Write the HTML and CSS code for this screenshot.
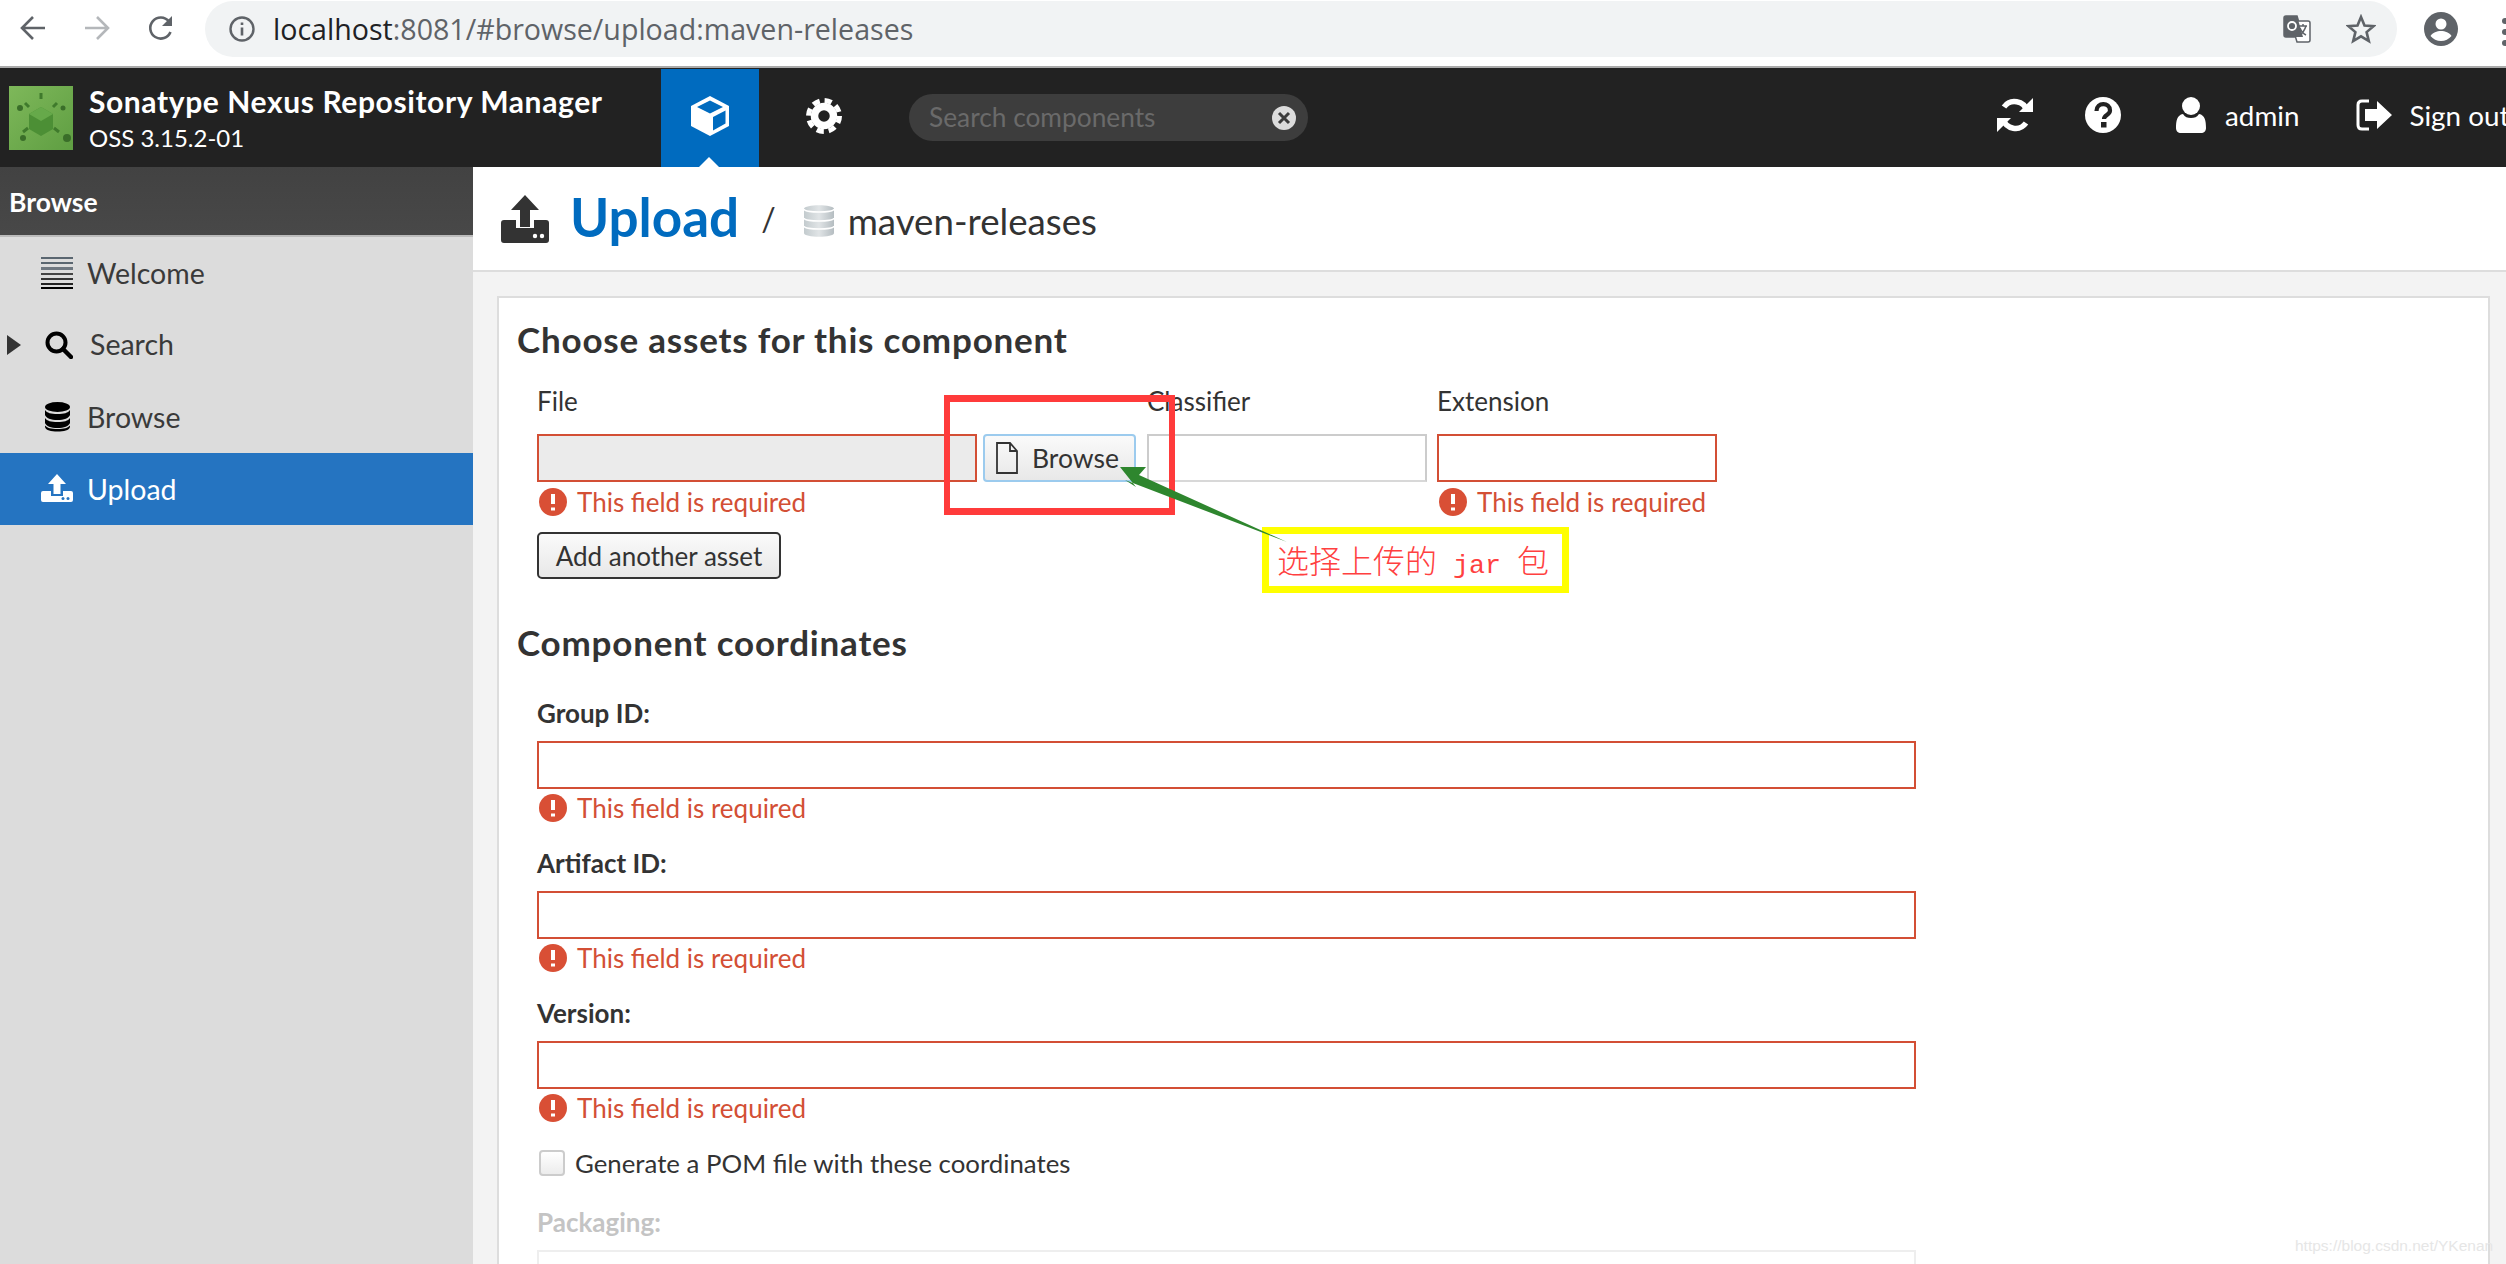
FILE: index.html
```html
<!DOCTYPE html>
<html lang="en">
<head>
    <meta charset="UTF-8">
    <title>Nexus Repository Manager</title>
    <link rel="stylesheet" href="styles.css">
</head>
<body>
    <!-- browser toolbar -->
    <div class="browser-bar">
        <svg class="nav-icon" viewBox="0 0 26 26"><path d="M25 13H3M13 2 2 13l11 11" fill="none" stroke="#5f6368" stroke-width="2.6"/></svg>
        <svg class="nav-icon" viewBox="0 0 26 26"><path d="M1 13h22M13 2l11 11-11 11" fill="none" stroke="#b4b7ba" stroke-width="2.6"/></svg>
        <svg class="nav-icon" viewBox="0 0 26 26"><path d="M22.5 17a10.5 10.5 0 1 1-1.6-10.6" fill="none" stroke="#5f6368" stroke-width="2.6"/><path d="M24 1v10H14z" fill="#5f6368"/></svg>
        <div class="url-pill">
            <svg class="info-icon" viewBox="0 0 26 26"><circle cx="13" cy="13" r="11.5" fill="none" stroke="#5f6368" stroke-width="2.4"/><path d="M13 11.5V19.5M13 6.5V9" stroke="#5f6368" stroke-width="2.6"/></svg>
            <span class="url-text"><span class="url-host">localhost</span>:8081/#browse/upload:maven-releases</span>
            <svg class="translate-icon" viewBox="0 0 28 28"><path d="M1 3q0-2 2-2h11l1.500 5H25q2 0 2 2v17q0 2-2 2H14l-1.500-5H3q-2 0-2-2z" fill="#fff" stroke="#5f6368" stroke-width="1.500"/><path d="M3 1h11l6 21H3q-2 0-2-2V3q0-2 2-2z" fill="#5f6368"/><circle cx="9" cy="11" r="4" fill="none" stroke="#fff" stroke-width="1.800"/><path d="M16 11h8M20 9v2M23 11q-2 6-6 9M17 13q2 5 6 7" fill="none" stroke="#5f6368" stroke-width="1.500"/></svg>
            <svg class="star-icon" viewBox="0 0 30 30"><path d="m15 3 3.500 8.500 9 .7-6.900 5.900 2.200 9L15 22.300 7.200 27.100l2.200-9-6.900-5.900 9-.7z" fill="none" stroke="#5f6368" stroke-width="2.600"/></svg>
        </div>
        <svg class="account-icon" viewBox="0 0 34 34"><circle cx="17" cy="17" r="17" fill="#5f6368"/><circle cx="17" cy="12" r="5.500" fill="#fff"/><path d="M6.500 24c2-3.500 6.500-5 10.500-5s8.500 1.500 10.500 5c-2.500 3-6.500 5-10.500 5s-8-2-10.500-5z" fill="#fff"/></svg>
        <div class="menu-dots"><i></i><i></i><i></i></div>
    </div>

    <!-- nexus header -->
    <header class="app-header">
        <svg class="logo" viewBox="0 0 64 64">
            <defs><linearGradient id="logoBg" x1="0" y1="0" x2="1" y2="1"><stop offset="0" stop-color="#7eb85a"/><stop offset="1" stop-color="#5f9e42"/></linearGradient></defs>
            <rect width="64" height="64" fill="url(#logoBg)"/>
            <path d="M32 21 44 28v15L32 50 20 43V28z" fill="#4c8f35"/>
            <path d="M32 21 44 28 32 35 20 28z" fill="#66a94a"/>
            <path d="M32 7v6M16 17l4 4M48 17l-4 4M14 46l5-4M50 46l-5-4" stroke="#3f7a2c" stroke-width="3"/>
            <circle cx="11" cy="22" r="3" fill="#3a6e29"/><circle cx="54" cy="22" r="2.500" fill="#3a6e29"/><circle cx="14" cy="52" r="3" fill="#3a6e29"/><circle cx="58" cy="52" r="4" fill="#3a6e29"/>
        </svg>
        <div class="brand">
            <div class="brand-title">Sonatype Nexus Repository Manager</div>
            <div class="brand-version">OSS 3.15.2-01</div>
        </div>
        <div class="mode-tab mode-tab-active">
            <svg class="cube-icon" viewBox="0 0 38 40"><path d="M19 0 38 10v20L19 40 0 30V10z" fill="#fff"/><path d="M19 4.500 32 11 19 17.500 6 11z" fill="#006bbf"/><path d="M22 21 34.500 14.500V27.500L22 34.500z" fill="#006bbf"/></svg>
            <span class="tab-notch"></span>
        </div>
        <div class="mode-tab">
            <svg class="gear-icon" viewBox="0 0 36 36"><circle cx="18" cy="18" r="15.500" fill="none" stroke="#fff" stroke-width="5" stroke-dasharray="7.200 5"/><circle cx="18" cy="18" r="9.500" fill="none" stroke="#fff" stroke-width="7.500"/></svg>
        </div>
        <div class="search-pill">
            <span class="search-hint">Search components</span>
            <svg class="clear-icon" viewBox="0 0 24 24"><circle cx="12" cy="12" r="12" fill="#dcdcdc"/><path d="m7 7 10 10M17 7 7 17" stroke="#3b3b3b" stroke-width="3"/></svg>
        </div>
        <div class="header-right">
            <svg class="head-icon" viewBox="0 0 36 36"><path d="M30 14A13 13 0 0 0 7 10" fill="none" stroke="#fff" stroke-width="5.500"/><path d="M36 1v14H22z" fill="#fff"/><path d="M6 22a13 13 0 0 0 23 4" fill="none" stroke="#fff" stroke-width="5.500"/><path d="M0 35V21h14z" fill="#fff"/></svg>
            <svg class="head-icon help-icon" viewBox="0 0 36 36"><circle cx="18" cy="18" r="18" fill="#fff"/><path d="M11.500 14c0-9 13.500-9 13.500-.5 0 4.500-6 4.500-6 8.500" fill="none" stroke="#222" stroke-width="4.200"/><rect x="16" y="25" width="5.500" height="5.500" fill="#222"/></svg>
            <svg class="user-icon" viewBox="0 0 30 36"><circle cx="15" cy="9" r="9" fill="#fff"/><path d="M0 31c0-7 1-13 7-14 2 3 4.500 4 8 4s6-1 8-4c6 1 7 7 7 14 0 3-2 5-5 5H5c-3 0-5-2-5-5z" fill="#fff"/></svg>
            <span class="head-text admin-text">admin</span>
            <svg class="head-icon signout-icon" viewBox="0 0 36 36"><path d="M13 4H6Q2 4 2 8v20q0 4 4 4h7" fill="none" stroke="#fff" stroke-width="3"/><path d="M9 12h12V4l15 14-15 14v-8H9z" fill="#fff"/></svg>
            <span class="head-text">Sign out</span>
        </div>
    </header>

    <div class="main">
        <nav class="sidebar">
            <div class="side-title">Browse</div>
            <a class="side-item">
                <svg class="side-icon" viewBox="0 0 32 32"><rect width="32" height="2" fill="#5a6670"/><rect y="5" width="32" height="2" fill="#5a6670"/><rect y="10" width="32" height="3" fill="#6e7780"/><rect y="16" width="32" height="2" fill="#444"/><rect y="21" width="32" height="2" fill="#333"/><rect y="26" width="32" height="2" fill="#222"/><rect y="30" width="32" height="2" fill="#000"/></svg>
                <span>Welcome</span>
            </a>
            <a class="side-item side-item-search">
                <span class="side-arrow"></span>
                <svg class="side-icon search-icon" viewBox="0 0 28 28"><circle cx="11.500" cy="11.500" r="9" fill="none" stroke="#000" stroke-width="4"/><path d="m18 18 8 8" stroke="#000" stroke-width="4.500" stroke-linecap="round"/></svg>
                <span>Search</span>
            </a>
            <a class="side-item">
                <svg class="side-icon" viewBox="0 0 32 32"><g transform="translate(4 1)"><ellipse cx="12.500" cy="5" rx="12.500" ry="5"/><path d="M0 8c2 3 6 4 12.500 4S23 11 25 8v5c-1 3-6 5-12.500 5S1 16 0 13zM0 16c2 3 6 4 12.500 4S23 19 25 16v5c-1 3-6 5-12.500 5S1 24 0 21z"/><path d="M0 23.500c2 2.500 6 3.500 12.500 3.500S23 26 25 23.500V25c-1 3.500-6 4.500-12.500 4.500S1 28.500 0 25z"/></g></svg>
                <span>Browse</span>
            </a>
            <a class="side-item side-item-active">
                <svg class="side-icon" viewBox="0 0 32 32"><path d="M16 1 25 11H19.500V21H12.500V11H7z" fill="#fff"/><path d="M2 18H10V23H22V18H30q2 0 2 2v7q0 2-2 2H2q-2 0-2-2v-7q0-2 2-2z" fill="#fff"/><circle cx="22" cy="25.500" r="1.500" fill="#2574c1"/><circle cx="27" cy="25.500" r="1.500" fill="#2574c1"/></svg>
                <span>Upload</span>
            </a>
        </nav>

        <section class="content">
            <div class="crumbs">
                <svg class="crumb-upload" viewBox="0 0 48 48"><path d="M24 0 38 15H29V32H19V15H10z" fill="#333"/><path d="M3 25H15V33H33V25H45q3 0 3 3v17q0 3-3 3H3q-3 0-3-3V28q0-3 3-3z" fill="#333"/><circle cx="34" cy="41" r="2.200" fill="#fff"/><circle cx="41" cy="41" r="2.200" fill="#fff"/></svg>
                <span class="crumb-root">Upload</span>
                <span class="crumb-sep">/</span>
                <svg class="crumb-db" viewBox="0 0 30 32"><defs><linearGradient id="dbFill" x1="0" y1="0" x2="1" y2="0"><stop offset="0" stop-color="#c3cbce"/><stop offset=".5" stop-color="#e0e4e6"/><stop offset="1" stop-color="#b5bdc1"/></linearGradient></defs><path d="M0 4c0-5 30-5 30 0v24c0 5-30 5-30 0z" fill="url(#dbFill)"/><path d="M0 4c0 4 30 4 30 0M0 13c0 4 30 4 30 0M0 21c0 4 30 4 30 0" fill="none" stroke="#fff" stroke-width="1.500"/></svg>
                <span class="crumb-leaf">maven-releases</span>
            </div>

            <div class="panel">
                <h2 class="section-title">Choose assets for this component</h2>
                <div class="asset-row">
                    <div class="asset-col col-file">
                        <div class="asset-label">File</div>
                        <div class="input input-bad input-readonly"></div>
                        <div class="field-error"><svg class="error-icon" viewBox="0 0 28 28"><circle cx="14" cy="14" r="14" fill="#d94f35"/><path d="M14 6v10M14 19.500v3" stroke="#fff" stroke-width="4"/></svg>This field is required</div>
                        <button class="btn-add">Add another asset</button>
                    </div>
                    <div class="asset-col col-browse">
                        <div class="asset-label"></div>
                        <button class="btn-browse">
                            <svg class="file-icon" viewBox="0 0 22 32"><path d="M1 1h13l7 8v22H1zM14 1v8h7" fill="none" stroke="#333" stroke-width="1.800"/></svg>
                            Browse
                        </button>
                    </div>
                    <div class="asset-col col-classifier">
                        <div class="asset-label">Classifier</div>
                        <div class="input"></div>
                    </div>
                    <div class="asset-col col-extension">
                        <div class="asset-label">Extension</div>
                        <div class="input input-bad"></div>
                        <div class="field-error"><svg class="error-icon" viewBox="0 0 28 28"><circle cx="14" cy="14" r="14" fill="#d94f35"/><path d="M14 6v10M14 19.500v3" stroke="#fff" stroke-width="4"/></svg>This field is required</div>
                    </div>
                </div>

                <h2 class="section-title section-title-second">Component coordinates</h2>
                <div class="fields">
                    <div class="field">
                        <label class="field-label">Group ID:</label>
                        <div class="input input-bad"></div>
                        <div class="field-error"><svg class="error-icon" viewBox="0 0 28 28"><circle cx="14" cy="14" r="14" fill="#d94f35"/><path d="M14 6v10M14 19.500v3" stroke="#fff" stroke-width="4"/></svg>This field is required</div>
                    </div>
                    <div class="field">
                        <label class="field-label">Artifact ID:</label>
                        <div class="input input-bad"></div>
                        <div class="field-error"><svg class="error-icon" viewBox="0 0 28 28"><circle cx="14" cy="14" r="14" fill="#d94f35"/><path d="M14 6v10M14 19.500v3" stroke="#fff" stroke-width="4"/></svg>This field is required</div>
                    </div>
                    <div class="field">
                        <label class="field-label">Version:</label>
                        <div class="input input-bad"></div>
                        <div class="field-error"><svg class="error-icon" viewBox="0 0 28 28"><circle cx="14" cy="14" r="14" fill="#d94f35"/><path d="M14 6v10M14 19.500v3" stroke="#fff" stroke-width="4"/></svg>This field is required</div>
                    </div>
                    <div class="check-row"><span class="checkbox"></span>Generate a POM file with these coordinates</div>
                    <label class="field-label field-label-disabled">Packaging:</label>
                    <div class="input input-disabled"></div>
                </div>
            </div>
        </section>
    </div>

    <!-- annotations drawn over the screenshot -->
    <div class="mark-box"></div>
    <div class="note-box">选择上传的<span class="note-latin"> jar </span>包</div>
    <svg class="mark-arrow" viewBox="0 0 180 90"><path d="M0 0H26L19 8 167 75 5 13 16 20z" fill="#2e862e"/></svg>
    <div class="watermark">https://blog.csdn.net/YKenan</div>
</body>
</html>
```

FILE: styles.css
```css
html, body {
    margin: 0;
    height: 1264px;
    overflow: hidden;
}
body {
    position: relative;
    font-family: Lato, "Open Sans", sans-serif;
    color: #333;
    background: #fff;
}

/* browser toolbar */
.browser-bar {
    display: flex;
    align-items: flex-start;
    height: 66px;
    box-sizing: border-box;
    padding-top: 1px;
    background: #fff;
}
.browser-bar > * {
    flex: none;
}
.nav-icon {
    width: 26px;
    height: 26px;
    margin: 14px 38px 0 0;
}
.nav-icon:first-child {
    margin-left: 20px;
}
.nav-icon:nth-child(3) {
    margin-right: 31px;
}
.url-pill {
    display: flex;
    align-items: center;
    width: 2192px;
    height: 56px;
    border-radius: 28px;
    background: #f1f3f4;
}
.info-icon {
    width: 26px;
    height: 26px;
    margin-left: 24px;
}
.url-text {
    flex: 1;
    margin: -2px 0 0 18px;
    font-family: "Open Sans", sans-serif;
    font-size: 28.6px;
    color: #5f6368;
    white-space: nowrap;
}
.url-host {
    color: #202124;
}
.translate-icon {
    width: 28px;
    height: 28px;
}
.star-icon {
    width: 30px;
    height: 30px;
    margin: 0 21px 0 35px;
}
.account-icon {
    width: 34px;
    height: 34px;
    margin: 11px 0 0 27px;
}
.menu-dots {
    display: flex;
    flex-direction: column;
    gap: 5px;
    margin: 17px 0 0 44px;
}
.menu-dots i {
    display: block;
    width: 6px;
    height: 6px;
    border-radius: 50%;
    background: #5f6368;
}

/* nexus header */
.app-header {
    display: flex;
    align-items: center;
    height: 101px;
    box-sizing: border-box;
    border-top: 2px solid #aaa;
    background: #222;
    color: #fff;
}
.app-header > * {
    flex: none;
}
.logo {
    width: 64px;
    height: 64px;
    margin-left: 9px;
}
.brand {
    width: 572px;
    margin-left: 16px;
}
.brand-title {
    font-size: 30px;
    font-weight: 700;
    letter-spacing: .6px;
    line-height: 36px;
    white-space: nowrap;
}
.brand-version {
    margin-top: 5px;
    font-size: 24px;
    line-height: 28px;
}
.mode-tab {
    position: relative;
    display: flex;
    align-items: center;
    justify-content: center;
    width: 98px;
    height: 98px;
    align-self: flex-end;
}
.mode-tab-active {
    background: #006bbf;
}
.cube-icon {
    width: 38px;
    height: 40px;
    margin-bottom: 4px;
}
.gear-icon {
    width: 36px;
    height: 36px;
    margin: 0 0 4px 32px;
}
.tab-notch {
    position: absolute;
    left: 38px;
    bottom: 0;
    border-left: 10px solid transparent;
    border-right: 10px solid transparent;
    border-bottom: 10px solid #fff;
}
.search-pill {
    display: flex;
    align-items: center;
    justify-content: space-between;
    width: 399px;
    height: 47px;
    box-sizing: border-box;
    margin: 0 0 0 52px;
    padding: 0 12px 0 20px;
    border-radius: 24px;
    background: #3d3d3d;
}
.search-hint {
    margin-top: -2px;
    font-size: 26.3px;
    color: #6a6a6a;
}
.clear-icon {
    width: 24px;
    height: 24px;
}
.header-right {
    display: flex;
    align-items: center;
    margin-left: 689px;
    padding-bottom: 5px;
    white-space: nowrap;
}
.head-icon {
    flex: none;
    width: 36px;
    height: 36px;
}
.help-icon {
    margin-left: 52px;
}
.user-icon {
    flex: none;
    width: 30px;
    height: 36px;
    margin-left: 55px;
}
.head-text {
    margin-left: 17px;
    font-size: 27.8px;
}
.admin-text {
    margin-left: 19px;
}
.signout-icon {
    margin-left: 57px;
}

/* left nav */
.main {
    display: flex;
    height: 1097px;
}
.sidebar {
    flex: none;
    width: 473px;
    background: #dcdcdc;
}
.side-title {
    height: 70px;
    box-sizing: border-box;
    padding: 19px 0 0 9px;
    border-bottom: 2px solid #bbb;
    background: linear-gradient(#424242, #484848);
    color: #fff;
    font-size: 26.500px;
    font-weight: 700;
}
.side-item {
    position: relative;
    display: flex;
    align-items: center;
    height: 72px;
    padding-left: 41px;
    font-size: 28.5px;
    color: #3a3a3a;
}
.side-item span:last-child {
    margin-left: 14px;
}
.side-item-search span:last-child {
    margin-left: 17px;
    margin-top: -2px;
}
.side-item-active {
    background: #2574c1;
    color: #fff;
}
.side-icon {
    width: 32px;
    height: 32px;
}
.search-icon {
    width: 28px;
    height: 28px;
    margin-left: 4px;
}
.side-arrow {
    position: absolute;
    left: 7px;
    top: 26px;
    border-top: 10px solid transparent;
    border-bottom: 10px solid transparent;
    border-left: 14px solid #333;
}

/* breadcrumb */
.content {
    flex: 1;
    min-width: 0;
    background: #f3f3f3;
}
.crumbs {
    display: flex;
    align-items: center;
    height: 105px;
    box-sizing: border-box;
    padding-left: 28px;
    border-bottom: 2px solid #ddd;
    background: #fff;
}
.crumb-upload {
    width: 48px;
    height: 48px;
}
.crumb-root {
    margin: -4px 0 0 21px;
    font-size: 53px;
    font-weight: 700;
    color: #006bbf;
}
.crumb-sep {
    margin-left: 22px;
    font-size: 32px;
    color: #333;
}
.crumb-db {
    width: 30px;
    height: 32px;
    margin: 4px 0 0 28px;
}
.crumb-leaf {
    margin: 4px 0 0 14px;
    font-size: 36.7px;
    color: #333;
}

/* form */
.panel {
    width: 1993px;
    box-sizing: border-box;
    margin: 24px 0 0 24px;
    padding: 18px 0 0 18px;
    border: 2px solid #ddd;
    background: #fff;
}
.section-title {
    height: 48px;
    margin: 0;
    font-size: 35px;
    font-weight: 700;
    letter-spacing: .8px;
    line-height: 47px;
    white-space: nowrap;
}
.section-title-second {
    margin-top: 40px;
}
.asset-row {
    display: flex;
    margin: 20px 0 0 20px;
}
.asset-col {
    box-sizing: border-box;
}
.col-file {
    width: 446px;
    padding-right: 6px;
}
.col-browse {
    width: 164px;
    padding-right: 11px;
}
.col-classifier {
    width: 290px;
    padding-right: 10px;
}
.col-extension {
    width: 280px;
}
.asset-label {
    height: 32px;
    margin-bottom: 18px;
    font-size: 26px;
    line-height: 34px;
}
.input {
    height: 48px;
    box-sizing: border-box;
    border: 2px solid #ccc;
    border-bottom-color: #d8d8d8;
    background: #fff;
}
.input-bad {
    border-color: #d34f35;
}
.input-readonly {
    background: #ebebeb;
}
.input-disabled {
    border-color: #eee;
}
.field-error {
    display: flex;
    align-items: center;
    height: 28px;
    margin-top: 6px;
    padding-left: 2px;
    font-size: 26px;
    color: #d34f35;
    white-space: nowrap;
}
.error-icon {
    flex: none;
    width: 28px;
    height: 28px;
    margin-right: 10px;
}
.btn-add {
    display: block;
    width: 244px;
    height: 47px;
    margin-top: 16px;
    padding: 0;
    border: 2px solid #333;
    border-radius: 5px;
    background: linear-gradient(#fafafa, #e8e8e8);
    color: #333;
    font-family: inherit;
    font-size: 26px;
}
.btn-browse {
    display: flex;
    align-items: center;
    width: 153px;
    height: 48px;
    box-sizing: border-box;
    padding: 0 0 0 11px;
    border: 2px solid #9ccbee;
    border-radius: 4px;
    background: linear-gradient(#fafafa, #e8e8e8);
    color: #333;
    font-family: inherit;
    font-size: 26.5px;
}
.file-icon {
    width: 22px;
    height: 32px;
    margin-right: 14px;
}
.fields {
    margin: 29px 0 0 20px;
    width: 1379px;
}
.field {
    margin-bottom: 24px;
}
.field-label {
    display: block;
    height: 32px;
    margin-bottom: 13px;
    font-size: 26px;
    font-weight: 700;
    line-height: 34px;
}
.field .field-error {
    margin-top: 5px;
}
.field-label-disabled {
    color: #c4c4c4;
}
.check-row {
    display: flex;
    align-items: center;
    height: 28px;
    margin: 27px 0 28px;
    font-size: 25.8px;
}
.checkbox {
    width: 26px;
    height: 26px;
    box-sizing: border-box;
    margin: 0 10px 0 2px;
    border: 2px solid #ccc;
    border-radius: 4px;
    background: linear-gradient(#fff, #ececec);
}

/* annotations */
.mark-box {
    position: absolute;
    left: 944px;
    top: 395px;
    width: 231px;
    height: 120px;
    box-sizing: border-box;
    border: solid #ff3b3b;
    border-width: 7px 6px;
}
.note-box {
    position: absolute;
    left: 1262px;
    top: 527px;
    width: 307px;
    height: 66px;
    box-sizing: border-box;
    padding-left: 8px;
    border: 7px solid #ff0;
    background: #fff;
    color: #ff4040;
    font-family: "Noto Sans CJK SC", sans-serif;
    font-size: 32px;
    font-weight: 300;
    line-height: 50px;
    white-space: pre;
}
.note-latin {
    font-family: "Liberation Mono", monospace;
    font-size: 26.670px;
}
.mark-arrow {
    position: absolute;
    left: 1120px;
    top: 467px;
    width: 180px;
    height: 90px;
}
.watermark {
    position: absolute;
    left: 2295px;
    top: 1237px;
    font-family: "Liberation Sans", sans-serif;
    font-size: 15.500px;
    color: #e6e6e6;
}
```
